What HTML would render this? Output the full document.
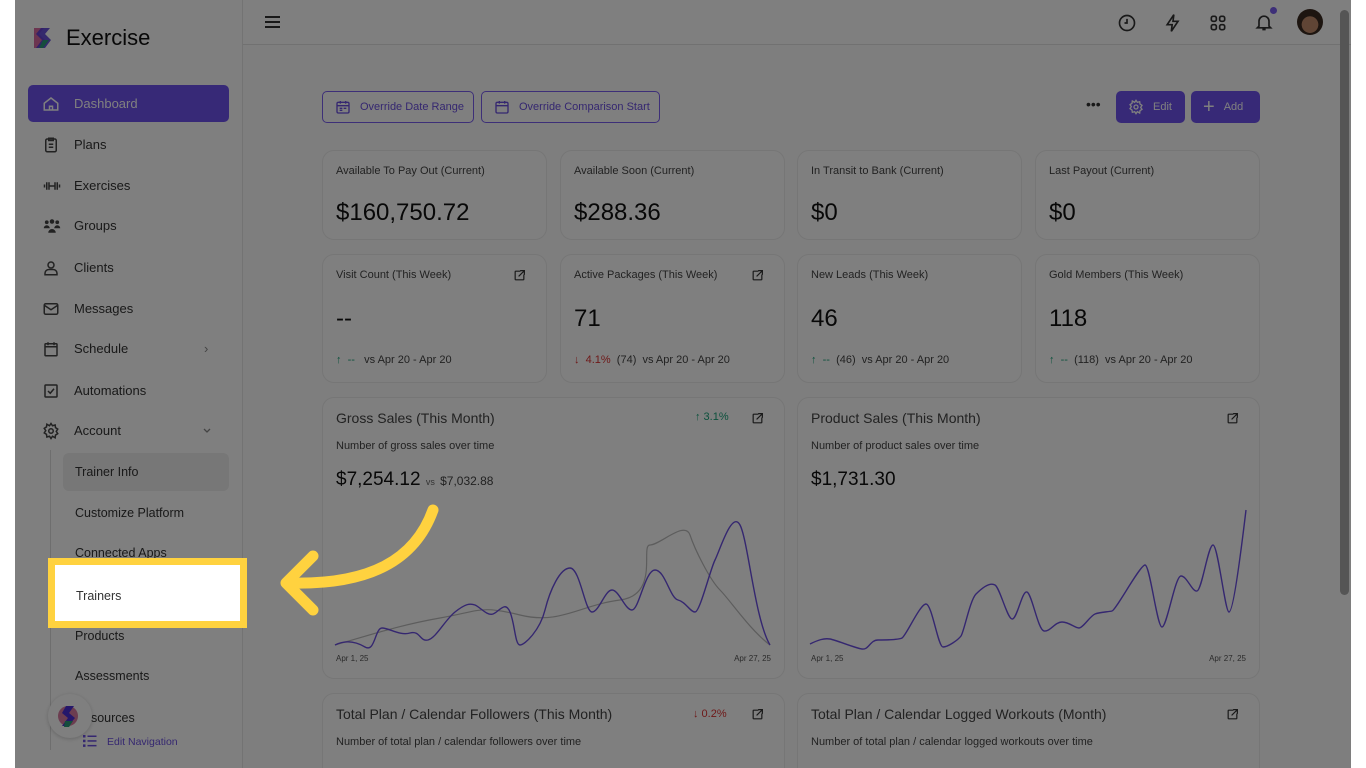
<!DOCTYPE html>
<html><head><meta charset="utf-8"><style>
*{box-sizing:border-box;margin:0;padding:0}
body{width:1366px;height:768px;overflow:hidden;background:#fff;font-family:"Liberation Sans",sans-serif;position:relative;color:#222}
.app{position:absolute;left:15px;top:0;width:1336px;height:768px;background:#fdfdfd;overflow:hidden}
.side{position:absolute;left:0;top:0;width:228px;height:768px;background:#fff;border-right:1px solid #e6e6e6}
.logo{position:absolute;left:16px;top:25px;display:flex;align-items:center;font-size:22px;color:#111}
.nav{position:absolute;left:13px;width:201px;height:37px;display:flex;align-items:center;font-size:13px;color:#333}
.nav svg{position:absolute;left:14px}
.nav span{position:absolute;left:46px}
.nav.act{background:#6f52ee;border-radius:5px;color:#fff}
.sub{position:absolute;left:60px;font-size:12.5px;color:#333}
.vline{position:absolute;left:35px;top:450px;width:1px;height:300px;background:#ddd}
.top{position:absolute;left:228px;top:0;right:0;height:45px;border-bottom:1px solid #e3e3e3;background:#fff}
.card{position:absolute;background:#fff;border:1px solid #ececec;border-radius:12px}
.lbl{position:absolute;left:13px;top:14px;font-size:11px;color:#444}
.big{position:absolute;left:13px;font-size:24px;color:#111}
.foot{position:absolute;left:13px;top:99px;font-size:11px;color:#444}
.g{color:#1aa37a}.r{color:#d33}
.ext{position:absolute;right:20px;top:14px;width:13px;height:13px}
.btn{position:absolute;top:91px;height:32px;border:1.5px solid #7a5ef0;border-radius:5px;color:#6a4fe0;font-size:11px;display:flex;align-items:center;padding-left:12px;gap:9px;background:#fff}
.pbtn{position:absolute;top:91px;height:32px;background:#6f52ee;color:#fff;border-radius:5px;font-size:11px;display:flex;align-items:center;gap:9px;padding-left:12px}
.ov{position:absolute;left:15px;top:0;width:1336px;height:768px;background:rgba(0,0,0,.5)}
.hl{position:absolute;left:48px;top:558px;width:199px;height:70px;border:7px solid #ffd23f;background:#fff}
.hl span{position:absolute;left:21px;top:24px;font-size:12.5px;color:#333}
.scroll{position:absolute;left:1340px;top:10px;width:9px;height:585px;background:#555;border-radius:5px}
</style></head><body>
<svg width="0" height="0" style="position:absolute"><defs><symbol id="ex" viewBox="0 0 24 24"><path d="M13 4H5a1 1 0 00-1 1v14a1 1 0 001 1h14a1 1 0 001-1v-8M14 3h7v7M21 3l-10 10" fill="none" stroke="#333" stroke-width="2.2" stroke-linecap="round"/></symbol></defs></svg>
<div class="app">
 <div class="side">
  <div class="logo"><svg width="26" height="26" viewBox="0 0 26 26"><path d="M3 3h10l-5 6 6 6-6 8H3z" fill="#d86ba0"/><path d="M10 3h9l-5 6 6 6-6 8h-9l6-8-6-6z" fill="#5a3fd6" opacity=".9"/><path d="M12 15l6 0-6 8h-4z" fill="#2a9a7a"/></svg><span style="margin-left:9px">Exercise</span></div>
  <div class="nav act" style="top:85px"><svg width="18" height="18" viewBox="0 0 24 24" fill="none" stroke="#fff" stroke-width="2"><path d="M3 11l9-7 9 7v9H3z"/><path d="M10 20v-5h4v5"/></svg><span>Dashboard</span></div>
  <div class="nav" style="top:126px"><svg width="18" height="18" viewBox="0 0 24 24" fill="none" stroke="#444" stroke-width="2"><rect x="5" y="4" width="14" height="17" rx="2"/><path d="M9 3h6v3H9zM9 11h6M9 15h6"/></svg><span>Plans</span></div>
  <div class="nav" style="top:167px"><svg width="20" height="18" viewBox="0 0 24 24" fill="none" stroke="#444" stroke-width="2"><path d="M2 10v4M5 7v10M8 7v10M8 12h8M16 7v10M19 7v10M22 10v4"/></svg><span>Exercises</span></div>
  <div class="nav" style="top:207px"><svg width="20" height="18" viewBox="0 0 24 24" fill="#444"><circle cx="5" cy="7" r="2.5"/><circle cx="12" cy="6" r="3"/><circle cx="19" cy="7" r="2.5"/><path d="M1 15a4 4 0 018 0zM15 15a4 4 0 018 0zM7 21a5 5 0 0110 0z"/></svg><span>Groups</span></div>
  <div class="nav" style="top:249px"><svg width="18" height="18" viewBox="0 0 24 24" fill="none" stroke="#444" stroke-width="2"><circle cx="12" cy="8" r="4"/><path d="M4 21v-2a5 5 0 015-5h6a5 5 0 015 5v2z"/></svg><span>Clients</span></div>
  <div class="nav" style="top:290px"><svg width="18" height="18" viewBox="0 0 24 24" fill="none" stroke="#444" stroke-width="2"><rect x="3" y="5" width="18" height="14" rx="2"/><path d="M3 7l9 6 9-6"/></svg><span>Messages</span></div>
  <div class="nav" style="top:330px"><svg width="18" height="18" viewBox="0 0 24 24" fill="none" stroke="#444" stroke-width="2"><rect x="4" y="5" width="16" height="16" rx="1"/><path d="M4 9h16M8 3v4M16 3v4"/></svg><span>Schedule</span><b style="position:absolute;left:176px;color:#888;font-weight:normal">›</b></div>
  <div class="nav" style="top:372px"><svg width="18" height="18" viewBox="0 0 24 24" fill="none" stroke="#444" stroke-width="2"><rect x="4" y="4" width="16" height="16" rx="1"/><path d="M8 12l3 3 5-6"/></svg><span>Automations</span></div>
  <div class="nav" style="top:412px"><svg width="18" height="18" viewBox="0 0 24 24" fill="none" stroke="#444" stroke-width="2"><circle cx="12" cy="12" r="3"/><path d="M12 2l2 3 3.5-1 .5 3.5 3 2-2 3 2 3-3 2-.5 3.5L14 19l-2 3-2-3-3.5 1-.5-3.5-3-2 2-3-2-3 3-2 .5-3.5L10 5z"/></svg><span>Account</span><svg style="left:174px" width="10" height="10" viewBox="0 0 10 10" fill="none" stroke="#888" stroke-width="1.3"><path d="M2 3l3 3 3-3"/></svg></div>
  <div class="vline"></div>
  <div style="position:absolute;left:48px;top:453px;width:166px;height:38px;background:#eee;border-radius:6px"></div>
  <div class="sub" style="top:465px">Trainer Info</div>
  <div class="sub" style="top:506px">Customize Platform</div>
  <div class="sub" style="top:546px">Connected Apps</div>
  <div class="sub" style="top:629px">Products</div>
  <div class="sub" style="top:669px">Assessments</div>
  <div class="sub" style="top:711px">Resources</div>
  <div style="position:absolute;left:33px;top:694px;width:44px;height:44px;border-radius:50%;background:#fff;box-shadow:0 1px 4px rgba(0,0,0,.2)"><svg width="26" height="26" viewBox="0 0 26 26" style="margin:9px"><circle cx="11" cy="13" r="10" fill="#d87aa0"/><path d="M9 3h8l-5 7 6 5-7 8h-6l6-8-6-5z" fill="#4a2fd6"/><path d="M8 18h8l-4 6h-5z" fill="#2a9a7a"/></svg></div>
  <svg style="position:absolute;left:68px;top:735px" width="14" height="12" viewBox="0 0 14 12" fill="#6a4fe0"><rect x="0" y="0" width="2.5" height="2.5"/><rect x="0" y="4.7" width="2.5" height="2.5"/><rect x="0" y="9.4" width="2.5" height="2.5"/><rect x="4.5" y="0.5" width="9" height="1.5"/><rect x="4.5" y="5.2" width="9" height="1.5"/><rect x="4.5" y="9.9" width="9" height="1.5"/></svg>
  <div style="position:absolute;left:92px;top:736px;font-size:10.5px;color:#6a4fe0">Edit Navigation</div>
 </div>
 <div class="top">
  <div style="position:absolute;left:22px;top:16px;width:15px;height:2px;background:#333;box-shadow:0 5px 0 #333,0 10px 0 #333"></div>
  <svg style="position:absolute;left:874px;top:13px" width="20" height="20" viewBox="0 0 24 24" fill="none" stroke="#333" stroke-width="2"><circle cx="12" cy="12" r="9"/><path d="M12 7v5H9"/></svg>
  <svg style="position:absolute;left:920px;top:13px" width="20" height="20" viewBox="0 0 24 24" fill="none" stroke="#333" stroke-width="2"><path d="M13 2L5 14h6l-1 8 8-12h-6z"/></svg>
  <svg style="position:absolute;left:965px;top:13px" width="20" height="20" viewBox="0 0 24 24" fill="none" stroke="#333" stroke-width="2"><rect x="4" y="4" width="6" height="6" rx="2"/><rect x="14" y="4" width="6" height="6" rx="2"/><rect x="4" y="14" width="6" height="6" rx="2"/><rect x="14" y="14" width="6" height="6" rx="2"/></svg>
  <svg style="position:absolute;left:1011px;top:12px" width="20" height="20" viewBox="0 0 24 24" fill="none" stroke="#333" stroke-width="2"><path d="M6 17V11a6 6 0 0112 0v6l2 2H4zM10 21h4"/></svg>
  <div style="position:absolute;left:1027px;top:7px;width:7px;height:7px;border-radius:50%;background:#7a5ef0"></div>
  <div style="position:absolute;left:1054px;top:9px;width:26px;height:26px;border-radius:50%;background:radial-gradient(circle at 50% 60%,#c08a6a 40%,#3a2a20 42%)"></div>
 </div>
 <div class="btn" style="left:307px;width:152px"><svg width="16" height="16" viewBox="0 0 24 24" fill="none" stroke="#6a4fe0" stroke-width="2"><rect x="3" y="5" width="18" height="16" rx="2"/><path d="M3 10h18M8 3v4M16 3v4M7 14h4M13 14h4M7 17h4"/></svg>Override Date Range</div>
 <div class="btn" style="left:466px;width:179px"><svg width="16" height="16" viewBox="0 0 24 24" fill="none" stroke="#6a4fe0" stroke-width="2"><rect x="3" y="5" width="18" height="16" rx="2"/><path d="M3 10h18M8 3v4M16 3v4"/></svg>Override Comparison Start</div>
 <div style="position:absolute;left:1071px;top:96px;font-size:14px;color:#333">•••</div>
 <div class="pbtn" style="left:1101px;width:69px"><svg width="16" height="16" viewBox="0 0 24 24" fill="none" stroke="#fff" stroke-width="2"><circle cx="12" cy="12" r="3"/><path d="M12 2l2 3 3.5-1 .5 3.5 3 2-2 3 2 3-3 2-.5 3.5L14 19l-2 3-2-3-3.5 1-.5-3.5-3-2 2-3-2-3 3-2 .5-3.5L10 5z"/></svg>Edit</div>
 <div class="pbtn" style="left:1176px;width:69px"><span style="font-size:20px;line-height:1">+</span>Add</div>

 <div class="card" style="left:307px;top:150px;width:225px;height:90px"><div class="lbl">Available To Pay Out (Current)</div><div class="big" style="top:48px">$160,750.72</div></div>
 <div class="card" style="left:545px;top:150px;width:225px;height:90px"><div class="lbl">Available Soon (Current)</div><div class="big" style="top:48px">$288.36</div></div>
 <div class="card" style="left:782px;top:150px;width:225px;height:90px"><div class="lbl">In Transit to Bank (Current)</div><div class="big" style="top:48px">$0</div></div>
 <div class="card" style="left:1020px;top:150px;width:225px;height:90px"><div class="lbl">Last Payout (Current)</div><div class="big" style="top:48px">$0</div></div>

 <div class="card" style="left:307px;top:254px;width:225px;height:129px"><div class="lbl">Visit Count (This Week)</div><svg class="ext"><use href="#ex"/></svg><div class="big" style="top:50px">--</div><div class="foot"><span class="g">↑ &nbsp;--</span>&nbsp;&nbsp; vs Apr 20 - Apr 20</div></div>
 <div class="card" style="left:545px;top:254px;width:225px;height:129px"><div class="lbl">Active Packages (This Week)</div><svg class="ext"><use href="#ex"/></svg><div class="big" style="top:50px">71</div><div class="foot"><span class="r">↓ &nbsp;4.1%</span>&nbsp; (74)&nbsp; vs Apr 20 - Apr 20</div></div>
 <div class="card" style="left:782px;top:254px;width:225px;height:129px"><div class="lbl">New Leads (This Week)</div><div class="big" style="top:50px">46</div><div class="foot"><span class="g">↑ &nbsp;--</span>&nbsp; (46)&nbsp; vs Apr 20 - Apr 20</div></div>
 <div class="card" style="left:1020px;top:254px;width:225px;height:129px"><div class="lbl">Gold Members (This Week)</div><div class="big" style="top:50px">118</div><div class="foot"><span class="g">↑ &nbsp;--</span>&nbsp; (118)&nbsp; vs Apr 20 - Apr 20</div></div>

 <div class="card" style="left:307px;top:397px;width:463px;height:282px">
  <div class="lbl" style="font-size:14px;top:12px">Gross Sales (This Month)</div>
  <div style="position:absolute;left:372px;top:13px;font-size:11px" class="g">↑ 3.1%</div><svg class="ext"><use href="#ex"/></svg>
  <div class="lbl" style="top:42px">Number of gross sales over time</div>
  <div class="big" style="top:71px;font-size:19px">$7,254.12 <span style="font-size:9px;color:#666">vs</span> <span style="font-size:12px;color:#444">$7,032.88</span></div>
  <div style="position:absolute;left:13px;bottom:15px;font-size:8px;color:#555">Apr 1, 25</div><div style="position:absolute;right:13px;bottom:15px;font-size:8px;color:#555">Apr 27, 25</div>
 </div>
 <div class="card" style="left:782px;top:397px;width:463px;height:282px">
  <div class="lbl" style="font-size:14px;top:12px">Product Sales (This Month)</div><svg class="ext"><use href="#ex"/></svg>
  <div class="lbl" style="top:42px">Number of product sales over time</div>
  <div class="big" style="top:71px;font-size:19px">$1,731.30</div>
  <div style="position:absolute;left:13px;bottom:15px;font-size:8px;color:#555">Apr 1, 25</div><div style="position:absolute;right:13px;bottom:15px;font-size:8px;color:#555">Apr 27, 25</div>
 </div>
 <div class="card" style="left:307px;top:693px;width:463px;height:100px">
  <div class="lbl" style="font-size:14px;top:12px">Total Plan / Calendar Followers (This Month)</div>
  <div style="position:absolute;left:370px;top:14px;font-size:11px" class="r">↓ 0.2%</div><svg class="ext"><use href="#ex"/></svg>
  <div class="lbl" style="top:42px">Number of total plan / calendar followers over time</div>
 </div>
 <div class="card" style="left:782px;top:693px;width:463px;height:100px">
  <div class="lbl" style="font-size:14px;top:12px">Total Plan / Calendar Logged Workouts (Month)</div><svg class="ext"><use href="#ex"/></svg>
  <div class="lbl" style="top:42px">Number of total plan / calendar logged workouts over time</div>
 </div>
</div>
<svg style="position:absolute;left:0;top:0" width="1366" height="768" fill="none">
 <path d="M335 645 C370 635 400 625 440 618 S480 605 520 615 S580 605 620 600 S640 545 650 545 S685 520 690 535 S710 580 720 590 S750 630 770 645" stroke="#bbb" stroke-width="1.2"/>
 <path d="M335 645 C345 640 355 641 365 647 S375 628 382 628 S400 636 410 633 S420 642 428 640 S445 620 455 612 S470 603 475 605 S487 616 493 614 S505 600 510 612 S515 645 520 645 S540 630 545 610 S560 568 570 568 S585 612 592 612 S605 590 612 590 S625 610 632 610 S645 570 655 570 S670 598 678 600 S690 612 695 612 S710 570 715 560 S732 510 740 525 S755 620 770 645" stroke="#6a4fe0" stroke-width="1.4"/>
 <path d="M810 644 C818 640 824 638 830 639 S855 648 862 649 S870 640 878 640 S898 640 902 638 S920 604 926 604 S938 647 943 647 S958 640 961 636 S970 600 976 594 S990 582 995 585 S1007 618 1012 619 S1022 590 1027 592 S1038 630 1044 631 S1055 622 1062 622 S1075 628 1079 628 S1090 616 1095 614 S1108 612 1112 611 S1140 565 1145 565 S1157 627 1162 627 S1175 576 1181 576 S1192 592 1197 591 S1208 545 1213 545 S1225 612 1229 612 S1240 560 1246 510" stroke="#6a4fe0" stroke-width="1.4"/>
</svg>
<div class="ov"></div>
<div class="scroll"></div>
<div class="hl"><span>Trainers</span></div>
<svg style="position:absolute;left:0;top:0" width="1366" height="768" fill="none">
 <path d="M433 510 C415 560 370 585 290 583" stroke="#ffd23f" stroke-width="11" stroke-linecap="round"/>
 <path d="M313 556 L286 583 L313 610" stroke="#ffd23f" stroke-width="11" stroke-linecap="round" stroke-linejoin="round"/>
</svg>
</body></html>
